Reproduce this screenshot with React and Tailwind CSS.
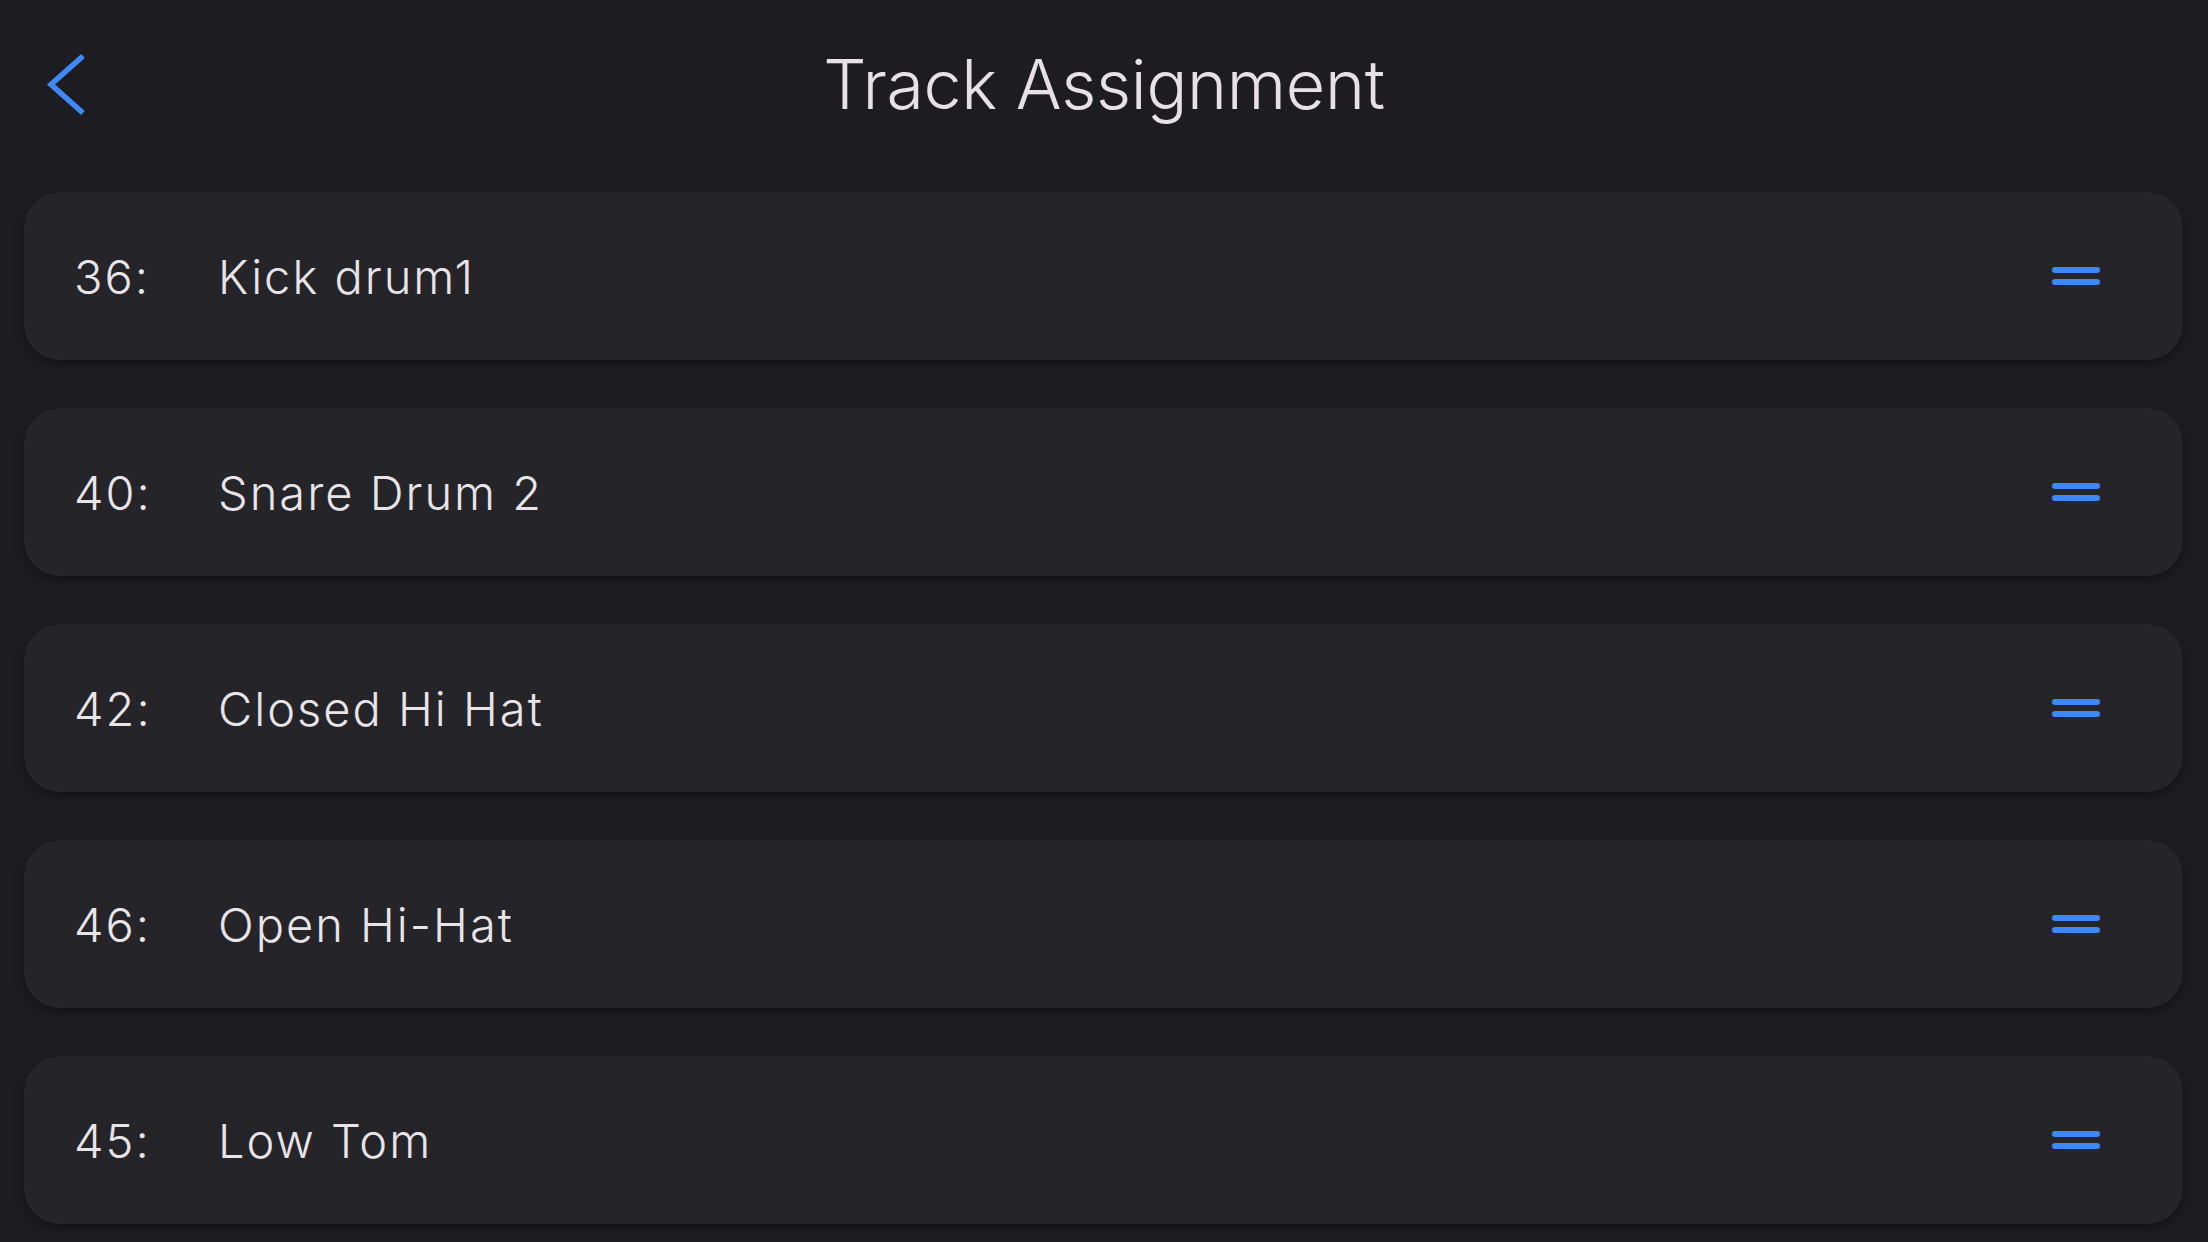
import React from "react";

const rows = [
  ["36:", "Kick drum1"],
  ["40:", "Snare Drum 2"],
  ["42:", "Closed Hi Hat"],
  ["46:", "Open Hi-Hat"],
  ["45:", "Low Tom"],
];

function Handle() {
  return (
    <div className="flex flex-col gap-[6px] w-[48px]">
      <div className="h-[6px] rounded-full bg-[#3f88f8]" />
      <div className="h-[6px] rounded-full bg-[#3f88f8]" />
    </div>
  );
}

export default function App() {
  return (
    <div
      className="w-[2208px] h-[1242px] overflow-hidden bg-[#1d1c21] text-[#e8e4e8]"
      style={{ fontFamily: "Inter, Roboto, 'Noto Sans', sans-serif" }}
    >
      <div className="relative h-[168px] flex items-center justify-center">
        <button className="absolute left-[46px] top-[53px]">
          <svg width="40" height="64" viewBox="0 0 40 64">
            <polyline
              points="37,3 5,31.5 37,60"
              fill="none"
              stroke="#3f88f8"
              strokeWidth="5.5"
              strokeLinecap="butt"
              strokeLinejoin="miter"
            />
          </svg>
        </button>
        <h1 className="text-[68px] leading-none font-light tracking-[-0.3px] text-[#e6e1e6]">
          Track Assignment
        </h1>
      </div>
      <div className="flex flex-col gap-[48px] pt-[24px] pl-[24px] pr-[25px]">
        {rows.map(([num, name]) => (
          <div
            key={num}
            className="h-[168px] rounded-[36px] bg-[#252429] flex items-center pl-[50px] pr-[83px] shadow-[0_4px_10px_rgba(0,0,0,0.35)]"
          >
            <span className="w-[144px] text-[47px] leading-none font-light tracking-[2px]">{num}</span>
            <span className="flex-1 text-[47px] leading-none font-light tracking-[2px]">{name}</span>
            <Handle />
          </div>
        ))}
      </div>
    </div>
  );
}
